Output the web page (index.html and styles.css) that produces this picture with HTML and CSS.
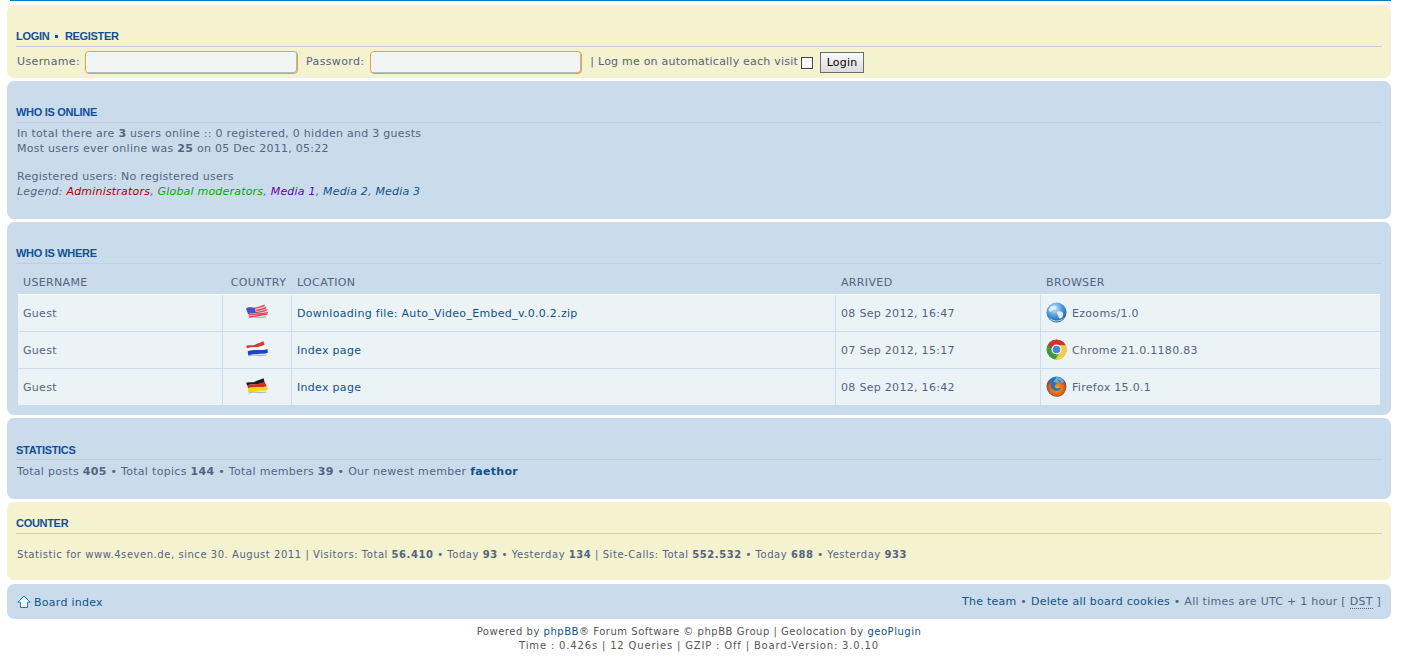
FILE: index.html
```html
<!DOCTYPE html>
<html lang="en">
<head>
<meta charset="utf-8">
<title>Who is where</title>
<link rel="stylesheet" href="styles.css">
</head>
<body>
<div class="wrap">
  <div class="topline"></div>

  <form class="panel yellow login">
    <h3><a href="#">Login</a> <span class="sq"></span> <a href="#">Register</a></h3>
    <div class="login-row">
      <label>Username:</label><input class="field" type="text">
      <label class="pw">Password:</label><input class="field f2" type="text">
      <span class="auto">| Log me on automatically each visit</span>
      <input class="check" type="checkbox">
      <button class="btn" type="button">Login</button>
    </div>
  </form>

  <section class="panel online">
    <h3>Who is online</h3>
    <p>In total there are <b>3</b> users online :: 0 registered, 0 hidden and 3 guests<br>Most users ever online was <b>25</b> on 05 Dec 2011, 05:22</p>
    <p class="reg">Registered users: No registered users<br><em>Legend: <span class="admin">Administrators</span>, <span class="mod">Global moderators</span>, <span class="m1">Media 1</span>, <span class="m2">Media 2</span>, <span class="m2">Media 3</span></em></p>
  </section>

  <section class="panel where">
    <h3>Who is where</h3>
    <table>
      <colgroup><col class="c1"><col class="c2"><col class="c3"><col class="c4"><col class="c5"></colgroup>
      <thead>
        <tr><th>Username</th><th class="ctr">Country</th><th>Location</th><th>Arrived</th><th>Browser</th></tr>
      </thead>
      <tbody>
        <tr>
          <td>Guest</td>
          <td class="ctr"><svg class="flag" width="24" height="18" viewBox="0 0 22 16"><defs><filter id="b1"><feGaussianBlur stdDeviation=".3"/></filter></defs><g filter="url(#b1)"><path d="M3 14c5-2 10 1 17-1l-1-1c-6 1-11-1-15 0z" fill="#b4b9b8"/><path d="M1 5c2-2 5-1 8-1s6-2 9-3l3 9c-3 1-6 1-9 1s-6 0-9 2z" fill="#f3c4ca"/><path d="M9 4.500c3 0 6-2 9-2.500M10 6.500c3 0 6-1 9.500-2.500M10 8.500c3 0 7-1 10.500-2.500M3.500 10.500c5-1 11 0 17.500-2M4 12.500c5-1 9-1 16.500-2.500" stroke="#d8404e" stroke-width="1.100" fill="none"/><path d="M1 5c2-2 5-1 8-1l1 5c-2 0-5 0-7 1z" fill="#3d55c4"/></g></svg></td>
          <td><a href="#">Downloading file: Auto_Video_Embed_v.0.0.2.zip</a></td>
          <td>08 Sep 2012, 16:47</td>
          <td><span class="brow"><svg class="bico" width="21" height="21" viewBox="0 0 22 22"><defs><radialGradient id="g1" cx=".4" cy=".3" r=".8"><stop offset="0" stop-color="#cfe6f7"/><stop offset=".55" stop-color="#3d8fd6"/><stop offset="1" stop-color="#0c4f9e"/></radialGradient></defs><circle cx="11" cy="11" r="10.500" fill="url(#g1)"/><path d="M5 5c3-2 5-1 6 0s-1 3-3 3-2 3-4 2-1-3 1-5zM12 10c3-1 6 0 6 3s-3 5-4 4-1-3-2-4 0-3 0-3z" fill="#e4eef5"/><path d="M3 16c3 4 12 5 16 0-2 6-14 6-16 0z" fill="#c3c9cc"/></svg>Ezooms/1.0</span></td>
        </tr>
        <tr>
          <td>Guest</td>
          <td class="ctr"><svg class="flag" width="24" height="18" viewBox="0 0 22 16"><defs><filter id="b2"><feGaussianBlur stdDeviation=".3"/></filter></defs><g filter="url(#b2)"><path d="M3 15c5-2 10 1 17-1l-1-1c-6 1-11-1-15 0z" fill="#b4b9b8"/><path d="M1 5c4-1 6 0 8-1s6-2 8-3l1 3.500c-3 1-6 2-8 2s-6 0-8 1z" fill="#d8383a"/><path d="M2 7.300c3-1 6-1 8-1s5-1 8-2l2 4c-3 1-6 1-9 1s-6 0-8 1z" fill="#f8fafc"/><path d="M2.500 10c3-1 6-1 9-1s6 0 9-1l.5 3.500c-3 1-6 1-9 1s-6 0-9 1.500z" fill="#1f44cc"/></g></svg></td>
          <td><a href="#">Index page</a></td>
          <td>07 Sep 2012, 15:17</td>
          <td><span class="brow"><svg class="bico" width="21" height="21" viewBox="0 0 22 22"><circle cx="11" cy="11" r="10.500" fill="#3f9a3c"/><path d="M2.200 6A10.500 10.500 0 0 1 20.600 6.500L11 6.500C8 6.500 6 8 5.600 10z" fill="#d2322c"/><path d="M20.600 6.500A10.500 10.500 0 0 1 9.500 21.400L14.800 13.500C16 11 15 8 13 6.500z" fill="#f5cc40"/><circle cx="11" cy="11" r="5.200" fill="#fff"/><circle cx="11" cy="11" r="4" fill="#4a86d8"/></svg>Chrome 21.0.1180.83</span></td>
        </tr>
        <tr>
          <td>Guest</td>
          <td class="ctr"><svg class="flag" width="24" height="18" viewBox="0 0 22 16"><defs><filter id="b3"><feGaussianBlur stdDeviation=".3"/></filter></defs><g filter="url(#b3)"><path d="M3 15c5-2 10 1 17-1l-1-1c-6 1-11-1-15 0z" fill="#b4b9b8"/><path d="M1 5c4-1 6 0 8-1s6-2 8-3l1 3.500c-3 1-6 2-8 2s-6 0-8 1z" fill="#1c1c1c"/><path d="M2 7.300c3-1 6-1 8-1s5-1 8-2l2 4c-3 1-6 1-9 1s-6 0-8 1z" fill="#d62a20"/><path d="M2.500 10c3-1 6-1 9-1s6 0 9-1l.5 3.500c-3 1-6 1-9 1s-6 0-9 1.500z" fill="#f6d60f"/></g></svg></td>
          <td><a href="#">Index page</a></td>
          <td>08 Sep 2012, 16:42</td>
          <td><span class="brow"><svg class="bico" width="21" height="21" viewBox="0 0 22 22"><defs><radialGradient id="g3" cx=".5" cy=".5" r=".6"><stop offset="0" stop-color="#f4b02a"/><stop offset=".7" stop-color="#dd5c14"/><stop offset="1" stop-color="#a9300c"/></radialGradient></defs><circle cx="11" cy="11" r="10.500" fill="#2a72b8"/><path d="M11 1c3 0 7 2 8 6L14 9 8 6z" fill="#5cb3dc"/><path d="M3 5c-3 5-2 12 3 15s12 2 14-4 0-10-1-11c0 2-1 3-2 3-1-2-3-4-5-4 1 2 2 3 1 4-2 0-4 1-4 3 2 3 6 2 7 1-1 3-5 5-8 3S4 10 6 7C5 7 4 6 3 5z" fill="url(#g3)"/></svg>Firefox 15.0.1</span></td>
        </tr>
      </tbody>
    </table>
  </section>

  <section class="panel stats">
    <h3>Statistics</h3>
    <p>Total posts <b>405</b> • Total topics <b>144</b> • Total members <b>39</b> • Our newest member <a class="new" href="#">faethor</a></p>
  </section>

  <section class="panel yellow counter">
    <h3>Counter</h3>
    <p>Statistic for www.4seven.de, since 30. August 2011 | Visitors: Total <b>56.410</b> • Today <b>93</b> • Yesterday <b>134</b> | Site-Calls: Total <b>552.532</b> • Today <b>688</b> • Yesterday <b>933</b></p>
  </section>

  <nav class="panel navbar">
    <a class="home" href="#"><svg width="14" height="14" viewBox="0 0 14 14"><path d="M7 1 .8 7.200H3.500V12.500H10.500V7.200H13.200z" fill="#fff" stroke="#0f86b8" stroke-width="1"/></svg><span class="home-text">Board index</span></a>
    <span class="right"><a href="#">The team</a> • <a href="#">Delete all board cookies</a> • All times are UTC + 1 hour [ <abbr>DST</abbr> ]</span>
  </nav>

  <footer class="foot">Powered by <a href="#">phpBB</a>® Forum Software © phpBB Group | Geolocation by <a href="#">geoPlugin</a><br><span class="foot-time">Time : 0.426s | 12 Queries | GZIP : Off | Board-Version: 3.0.10</span></footer>
</div>
</body>
</html>
```
FILE: styles.css
```css
* { box-sizing: border-box; }
html, body { margin: 0; padding: 0; background: #fff; }
body { font-family: "DejaVu Sans", Verdana, sans-serif; font-size: 11px; color: #536482; letter-spacing: .27px; }
.wrap { padding: 0 16px 0 7px; }
.topline { height: 1px; margin-left: 3px; background: #0a7cb8; margin-bottom: 4px; }
a { color: #105289; text-decoration: none; }
p { margin: 0; }
b { font-weight: bold; }

.panel { background: #cadceb; border-radius: 7px; padding: 0 9px; margin-bottom: 3px; }
.yellow { background: #f5f2d0; }

h3 {
  margin: 0;
  font-family: "Liberation Sans", Arial, sans-serif;
  font-size: 11px;
  font-weight: bold;
  letter-spacing: -.3px;
  line-height: 13px;
  text-transform: uppercase;
  color: #115098;
  border-bottom: 1px solid #c8ccd6;
  padding-bottom: 3px;
}
h3 a { color: #115098; }
.sq { display: inline-block; width: 3px; height: 3px; background: #115098; vertical-align: 2px; margin: 0 4px 0 3px; }

.login { height: 73px; padding-top: 25px; }
.login-row { display: flex; align-items: center; padding-left: 1px; margin-top: 3px; height: 25px; }
.login-row label, .auto { position: relative; top: -1px; letter-spacing: .36px; }
.auto { letter-spacing: .22px; margin-left: 8px; }
.field { width: 213px; height: 23px; border: 1px solid #f0a030; border-radius: 4px; background: #f2f4f3; box-shadow: inset 1px 1px 0 #fff, inset -1px -1px 0 #b4b8c0; margin: 0 0 0 5px; padding: 0; }
.f2 { width: 212px; margin-left: 6px; }
.pw { margin-left: 8px; }
.check { appearance: none; width: 12px; height: 12px; margin: 1px 0 0 3px; background: #fff; border: 1px solid #444; box-shadow: 1px 1px 0 #fff; }
.btn { width: 44px; height: 21px; margin: -1px 0 0 7px; padding: 0; background: linear-gradient(#fafafa, #dcdcdc); border: 1px solid #6b6b6b; font: 11px "DejaVu Sans", sans-serif; letter-spacing: .2px; color: #000; }

.online { height: 138px; padding-top: 25px; }
.online p { line-height: 15px; padding-left: 1px; }
.online h3 + p { margin-top: 3px; }
.online .reg { margin-top: 13px; }
.online em { letter-spacing: .2px; }
.admin { color: #a00; }
.mod { color: #0a0; }
.m1 { color: #60a; }
.m2 { color: #105289; }

.where { height: 193px; padding-top: 25px; }
table { border-collapse: separate; border-spacing: 0; table-layout: fixed; width: 1362px; margin: 0 0 0 2px; }
.c1 { width: 204px; } .c2 { width: 69px; } .c3 { width: 544px; } .c4 { width: 205px; } .c5 { width: 340px; }
th { height: 31px; font-weight: normal; text-transform: uppercase; text-align: left; padding: 7px 0 0 6px; color: #536482; letter-spacing: .35px; }
th:first-child { padding-left: 5px; }
th.ctr { text-align: center; padding-left: 4px; }
td { height: 37px; background: #ecf3f7; border-bottom: 1px solid #cadceb; border-left: 1px solid #cadceb; padding: 1px 0 0 5px; letter-spacing: .3px; }
td:first-child { border-left: 0; padding-left: 5px; }
thead th { border-bottom: 1px solid #fff; }
tbody tr:last-child td { border-bottom: 0; height: 36px; }
td.ctr { text-align: center; padding: 0 0 2px; }
.flag { display: inline-block; vertical-align: middle; }
.brow { display: flex; align-items: center; gap: 5px; }
.bico { flex: none; margin-top: -3px; }

.stats { height: 81px; padding-top: 26px; }
.stats h3 { padding-bottom: 2px; }
.stats p { line-height: 15px; padding: 4px 0 0 1px; letter-spacing: .3px; }
.new { font-weight: bold; }

.counter { height: 78px; padding-top: 15px; margin-bottom: 4px; }
.counter p { font-size: 10px; letter-spacing: .545px; line-height: 14px; padding-top: 14px; padding-left: 1px; }

.navbar { height: 35px; display: flex; align-items: center; justify-content: space-between; padding: 0 10px; }
.home { display: flex; align-items: center; gap: 3px; }
.home-text { padding-top: 1px; }
abbr { border-bottom: 1px dotted #536482; }

.foot { text-align: center; font-size: 10px; letter-spacing: .53px; line-height: 14px; color: #555; padding: 3px 0 0; }
.foot-time { letter-spacing: .83px; }
```
